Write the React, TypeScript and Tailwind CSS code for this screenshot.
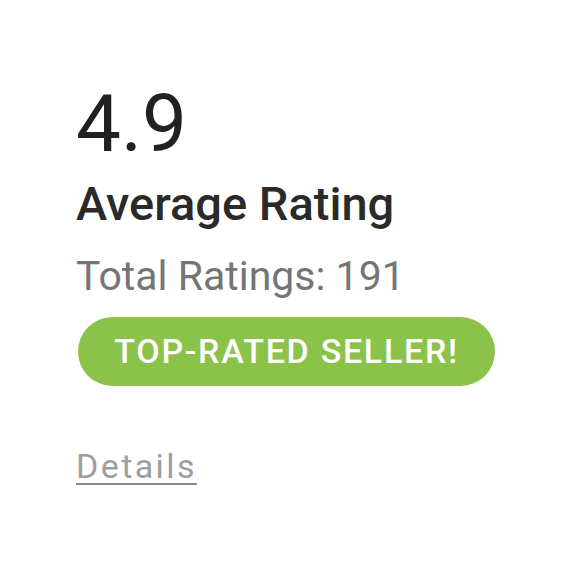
import React from "react";

export default function App() {
  return (
    <div className="w-[580px] h-[580px] bg-white font-['Roboto',sans-serif]">
      <div className="flex flex-col items-start pl-[76px] pt-[84px]">
        <div className="text-[80px] leading-none font-normal text-[#212121]">4.9</div>
        <div className="mt-[16px] text-[47px] leading-none font-medium text-[#2a2a2a]">Average Rating</div>
        <div className="mt-[29px] text-[41px] leading-none text-[#757575]">Total Ratings: 191</div>
        <div className="mt-[20px] ml-[2px] w-[417px] h-[69px] flex items-center justify-center rounded-full bg-[#8bc34a] text-white text-[34px] font-medium tracking-[1.7px]">
          TOP-RATED SELLER!
        </div>
        <a href="#" className="mt-[63px] text-[34px] leading-none tracking-[2.4px] text-[#9e9e9e] underline decoration-[#8a8a8a] decoration-2 underline-offset-[5px]">
          Details
        </a>
      </div>
    </div>
  );
}
